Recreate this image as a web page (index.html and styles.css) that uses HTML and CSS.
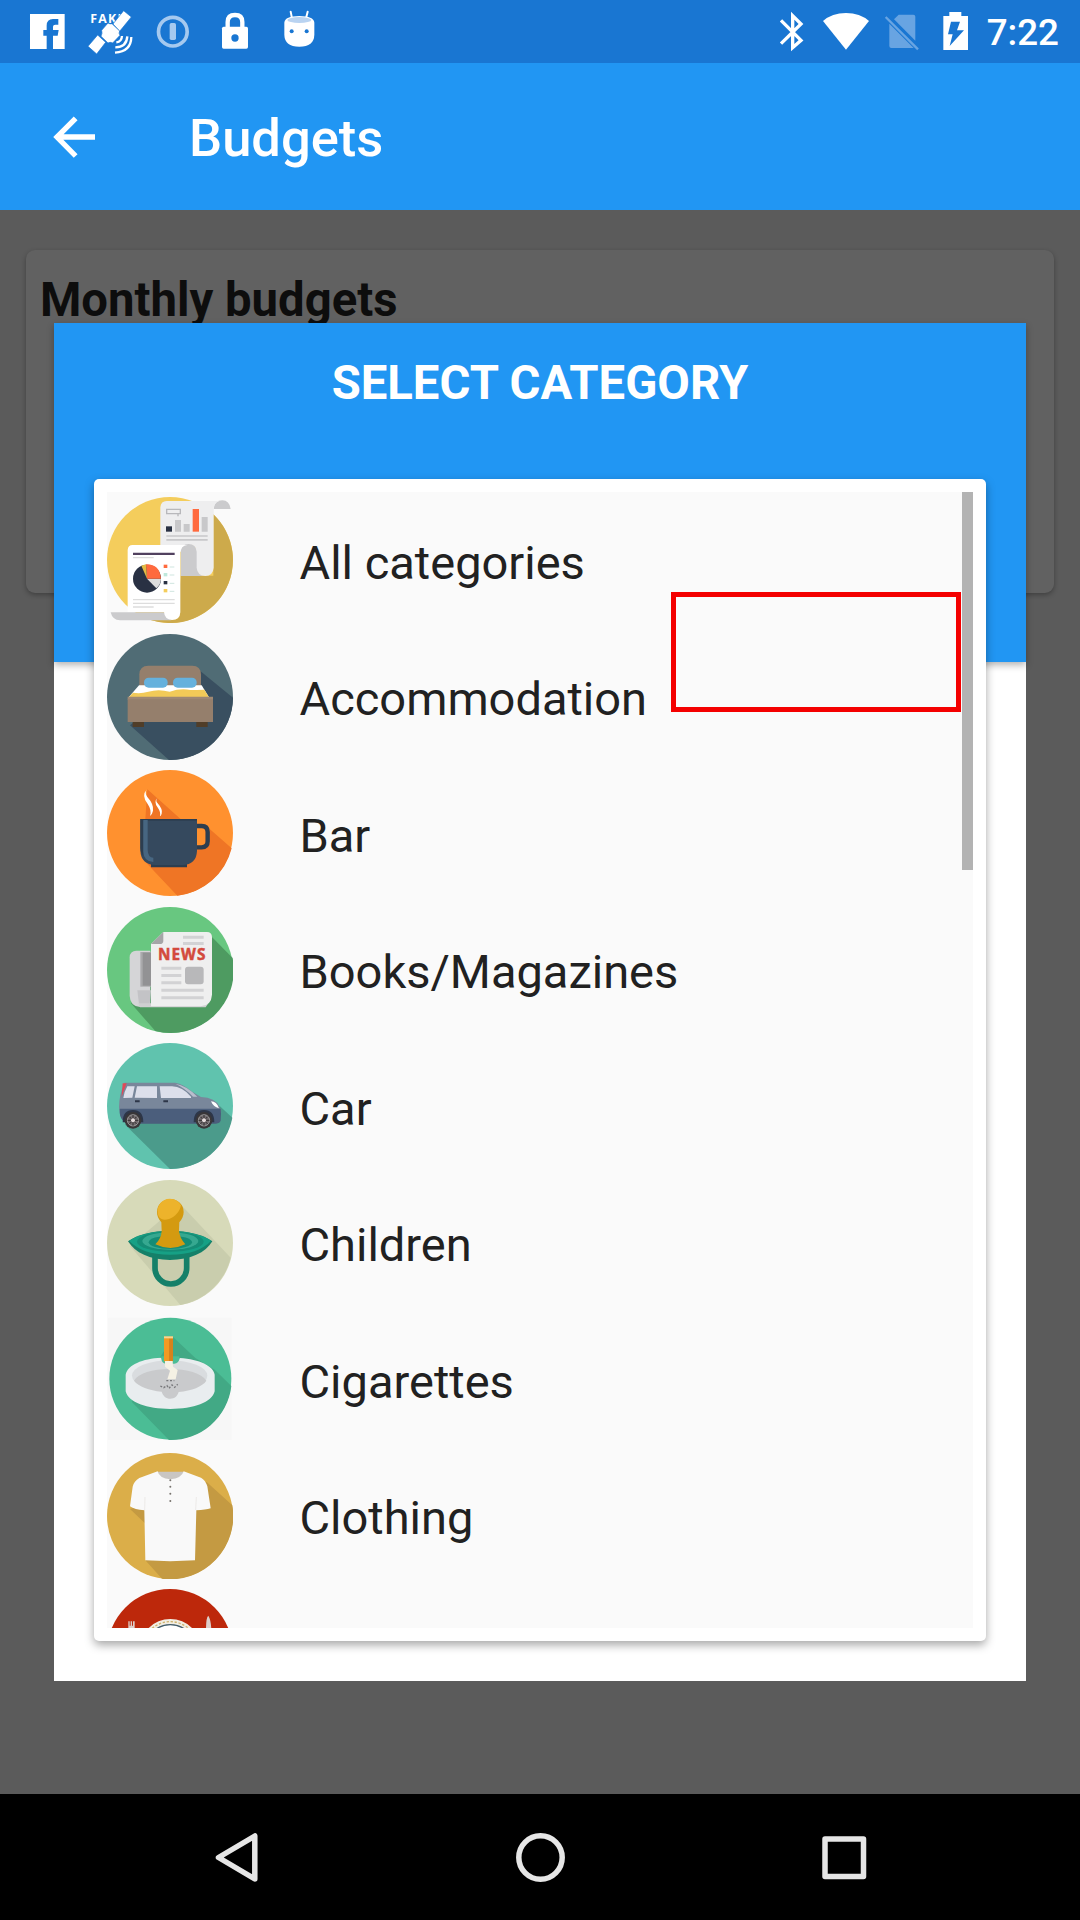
FILE: index.html
```html
<!DOCTYPE html>
<html lang="en">
<head>
<meta charset="utf-8">
<title>Budgets</title>
<link rel="stylesheet" href="styles.css">
</head>
<body>
<div class="screen">
  <header class="status">
    <div class="status-group">
      <svg width="76.67" height="63" viewBox="0 0 230 189"><path fill="#fff" d="M90 42h104v105h-35v-40h14l3-17h-17V80q0-6 7-6h9V57h-16q-19 0-19 20v13h-10v17h10v40H90z"/></svg>
      <svg width="66.67" height="63" viewBox="230 0 200 189"><text class="fake" x="270" y="69" textLength="102">FAKE</text><g stroke="#1976d2" stroke-width="2" fill="#fff"><path d="M263 139L292 105l24 22-27 35zM338 72l32-40 23 19-35 43z"/><path d="M304 91l19-22q6 4 12 2l23 22q-4 7 1 13l-22 23q-8-4-14 0l-21-20q5-9 2-18z"/></g><path fill="none" stroke="#fff" stroke-width="7" d="M348 127q16-2 17-19M345 142q34-1 36-33M344 158q48-3 49-47"/></svg>
      <svg width="60" height="63" viewBox="430 0 180 189"><circle cx="519.500" cy="95" r="43" fill="none" stroke="#a5c9ef" stroke-width="11"/><rect x="510" y="69" width="19" height="51" rx="5" fill="#a5c9ef"/></svg>
      <svg width="66.67" height="63" viewBox="610 0 200 189"><path fill="none" stroke="#fff" stroke-width="13" d="M684 84V66q0-21 22-21t22 21v18"/><rect x="667" y="80" width="78" height="66" rx="5" fill="#fff"/><circle cx="706" cy="114" r="11" fill="#1976d2"/></svg>
      <svg width="60" height="63" viewBox="810 0 180 189"><path stroke="#fff" stroke-width="6" stroke-linecap="round" d="M872 35l4 20M923 35l-5 20"/><path fill="#fff" d="M853 68q2-20 45-20t45 20v36q-1 36-45 36t-45-36z"/><ellipse cx="898" cy="60" rx="36" ry="9" fill="#b9d3f1"/><circle cx="875" cy="94" r="6" fill="#1976d2"/><circle cx="920" cy="94" r="6" fill="#1976d2"/></svg>
    </div>
    <div class="status-group">
      <svg width="40" height="63" viewBox="100 0 120 189"><path fill="none" stroke="#fff" stroke-width="10" d="M121 61l60 60-25 22V47l25 25-60 59"/></svg>
      <svg width="63.33" height="63" viewBox="220 0 190 189"><path fill="#fff" d="M247 63Q274 39 316 39t69 24l-69 86z"/></svg>
      <svg width="50" height="63" viewBox="410 0 150 189"><g fill="#68a4e2"><path d="M461 58l14-14h44q6 0 6 6v72z"/><path d="M447 71l73 73h-67q-6 0-6-6z"/></g><path stroke="#68a4e2" stroke-width="7" d="M436 51l97 97"/></svg>
      <svg width="56.67" height="63" viewBox="560 0 170 189"><path fill="#fff" d="M609 48h18V36h36v12h20v102h-74z"/><path fill="#1976d2" d="M632 65h27l-9 26h21l-43 47 9-35h-14z"/></svg>
      <span class="clock">7:22</span>
    </div>
  </header>

  <div class="toolbar">
    <svg class="back" width="43" height="43" viewBox="158 346 129 129"><path fill="none" stroke="#fff" stroke-width="16" d="M284 409H168M226 353l-56 56 56 57"/></svg>
    <h1 class="title">Budgets</h1>
  </div>

  <main class="page">
    <section class="budget-card"><h2 class="budget-title">Monthly budgets</h2></section>
    <div class="overlay">
      <section class="dialog">
        <div class="dialog-head">SELECT CATEGORY</div>
        <div class="panel">
          <ul class="list">
            <li class="row">
              <svg class="icon" viewBox="51 81 378 378"><circle cx="240" cy="270" r="189" fill="#f4cd5c"/><path fill="#cdaa4b" d="M370 133A189 189 0 0 1 182 450l80-3 10-130h98z"/><path fill="#cbcbcd" d="M371 117q2-26 26-26 21 0 25 26zM62 427h160l22 24H90q-23-1-28-24zM272 240q2-20 25-20t27 35v40q0 23 21 23h-73z"/><path fill="#eeeeef" d="M211 112q2-19 19-19h158q-17 6-17 24v176q-2 24-25 25-24-1-26-25v-48q-2-23-24-23-22 1-24 23h-61z"/><path fill="#fff" d="M113 240q1-15 15-15h164q-20 3-21 22v180q-1 23-25 23-22-1-24-24H113z"/><path fill="none" stroke="#b8b8bb" stroke-width="4" d="M230 118h41v13h-41zM264 132v7"/><path fill="#c8c8ca" d="M255 150h18v35h-18zM281 162h18v23h-18zM335 141h18v44h-18zM229 196h124v4H229zM229 207h124v5H229z"/><path fill="#293143" d="M228 169h18v16h-18z"/><path fill="#ff6a3e" d="M308 117h19v68h-19z"/><path fill="#51415f" d="M129 248h125v7H129z"/><path fill="#ddd" d="M129 261h62v4h-62zM129 387h125v4H129zM129 398h125v4H129zM129 409h62v4h-62z"/><circle cx="171" cy="326" r="42" fill="#293143"/><path fill="#ddd" d="M171 326h42q-1 18-14 29z"/><path fill="#ff6a3e" d="M171 326l-3-43q41-1 45 43z"/><path fill="#e3bb43" d="M171 326l-17-39 14-4z"/><path fill="#ff6a3e" d="M221 284h11v10h-11z"/><path fill="#bfe8dc" d="M221 309h11v10h-11z"/><path fill="#293143" d="M221 333h11v10h-11z"/><path fill="#f4cd5c" d="M221 357h11v10h-11z"/><path stroke="#cfe5df" stroke-width="3" d="M239 291h14M239 315h14M239 340h14M239 364h14"/></svg>
              <span class="label">All categories</span></li>
            <li class="row">
              <svg class="icon" viewBox="51 491 378 378"><circle cx="240" cy="680" r="189" fill="#506c75"/><path fill="#394f60" d="M328 600l101 82a189 189 0 0 1-192 187L120 765z"/><path fill="#957f6c" d="M148 652v-40q1-26 27-26h132q25 0 26 26v40z"/><path fill="#fff" d="M147 645h188l22 36H116z"/><path fill="#f2ca58" d="M129 667q23 4 46-3 30-9 64 0 33-11 62-5 18 0 42-1l15 24H115z"/><rect x="162" y="622" width="71" height="30" rx="14" fill="#65b1dd"/><rect x="249" y="622" width="71" height="30" rx="14" fill="#65b1dd"/><path fill="#9f8873" d="M113 679h256v10H113z"/><path fill="#957f6c" d="M113 687h256v68H113z"/><path fill="#503d28" d="M128 755h34v15h-34zM319 755h34v15h-34z"/></svg>
              <span class="label">Accommodation</span></li>
            <li class="row">
              <svg class="icon" viewBox="51 30 378 378"><circle cx="240" cy="219" r="189" fill="#ff912f"/><path fill="#ef7525" d="M172 88l103 92 78 22 72 63A189 189 0 0 1 262 407L158 297z"/><path fill="#ff912f" d="M320 203h26v54h-26z"/><path fill="#fff" d="M171 88q-8 11 1 23 20 22 17 41-2 11-9 16 6-17-7-36-20-25-2-44zM203 113q-8 9 0 17 16 18 12 31-2 6-5 8 3-12-6-25-15-19-1-31z"/><path fill="none" stroke="#2c3e50" stroke-width="13" d="M318 198h17q18 0 18 18v28q0 18-18 18h-22"/><path fill="#2c3e50" d="M183 308h108v14H183z"/><path fill="#35495e" d="M151 177h170v96q-2 41-43 42h-82q-43-2-45-43z"/><path fill="#2c3e50" d="M151 177h170v5H159v105q-8-10-8-23z"/><path fill="#476681" d="M160 180h13v90q1 23 17 23v13q-29-2-30-31z"/></svg>
              <span class="label">Bar</span></li>
            <li class="row">
              <svg class="icon" viewBox="51 440 378 378"><circle cx="240" cy="629" r="189" fill="#68c780"/><path fill="#4e9b61" d="M362 526l66 67A189 189 0 0 1 196 812l-73-83z"/><path fill="#d5d5d7" d="M119 591q1-20 20-20h42v169h-31q-30-3-31-34z"/><path fill="#aaaaac" d="M151 575h33v104h-33z"/><path fill="#929294" d="M158 577h25v99h-25z"/><path fill="#c3c3c6" d="M142 690h41l-5 50h-30z"/><path fill="#cfcfd1" d="M145 729h210l-8 12H150z"/><path fill="#efefef" d="M183 551l37-36h131q14 0 15 15v173q-2 33-34 35H183z"/><path fill="#a5a5a7" d="M183 551l37-36v26q0 10-11 10z"/><text class="news" x="204" y="600" textLength="142">NEWS</text><path fill="#d2d2d4" d="M279 526h62v9h-62zM279 545h62v9h-62zM214 619h60v9h-60zM214 641h60v9h-60zM214 663h60v9h-60zM214 685h127v9H214zM214 708h127v9H214z"/><rect x="285" y="619" width="56" height="53" rx="9" fill="#b8b8ba"/></svg>
              <span class="label">Books/Magazines</span></li>
            <li class="row">
              <svg class="icon" viewBox="51 25 378 378"><circle cx="240" cy="214" r="189" fill="#60c3ae"/><path fill="#4b9b8b" d="M390 215l37 34A189 189 0 0 1 240 403L104 269z"/><path fill="#79879b" d="M104 144h152q23 3 48 26l29 17q43 2 56 29l5 18-304 2-3-18q0-38 17-74z"/><path fill="#4b5e7c" d="M89 222h303q2 13 0 35-2 10-14 10H112q-22-10-23-33z"/><path fill="#dcdfeb" d="M112 155h22l-7 34-27 1q2-18 12-35zM141 155h60v35l-67-1zM209 155h37q31 1 57 31v4h-90z"/><path fill="#b9becd" d="M256 147q33 5 66 39h-13q-23-25-53-39z"/><path fill="#e04958" d="M98 146h12l-9 23-6 18z"/><path fill="#fff" d="M363 200q17 0 24 21-17-4-24-21z"/><path fill="#2d3648" d="M135 197h14v6h-14zM220 197h14v6h-14zM98 263q0-37 31-37t31 37zM311 263q0-37 31-37t31 37z"/><g fill="#393638"><circle cx="129" cy="257" r="25"/><circle cx="342" cy="257" r="25"/></g><g fill="#716b6d" stroke="#bbb" stroke-width="2"><circle cx="129" cy="257" r="17"/><circle cx="342" cy="257" r="17"/></g><path stroke="#332e30" stroke-width="3" d="M113 257h32M129 241v32M118 246l22 22M140 246l-22 22M326 257h32M342 241v32M331 246l22 22M353 246l-22 22"/><g fill="#e4dada"><circle cx="129" cy="257" r="6"/><circle cx="342" cy="257" r="6"/></g></svg>
              <span class="label">Car</span></li>
            <li class="row">
              <svg class="icon" viewBox="51 435 378 378"><circle cx="240" cy="624" r="189" fill="#d7dab9"/><path fill="#c9cdad" d="M270 506l152 162a189 189 0 0 1-151 142L120 633z"/><path fill="none" stroke="#158069" stroke-width="17" d="M195 660v39a47.500 48 0 0 0 95 0v-39"/><path fill="#158069" d="M114 619C140 600 185 587 240 587s102 13 127 32c-20 34-66 56-127 56s-105-22-126-56z"/><path fill="#16a085" d="M117 617c30-18 70-28 123-28s95 10 124 28c-27 27-66 42-124 42s-96-15-123-42z"/><ellipse cx="241" cy="620" rx="100" ry="30" fill="#158c75"/><ellipse cx="241" cy="618" rx="84" ry="26" fill="#36a890"/><ellipse cx="241" cy="622" rx="65" ry="20" fill="#158c75"/><path fill="#d49a10" d="M214 562c-9-10-13-20-13-31a40 39 0 0 1 80 0c0 11-5 22-13 31l-1 26q2 21 19 40-45 22-90 0 18-18 19-40z"/><path fill="#edb32b" d="M207 546a36 36 0 0 1 66-35c-4 19-16 34-36 41-13 4-22 3-30-6z"/></svg>
              <span class="label">Children</span></li>
            <li class="row">
              <svg class="icon" viewBox="51 19 378 378"><path fill="#f7f7f7" d="M55 24h369v367H55z"/><circle cx="241" cy="207" r="183" fill="#4bbd95"/><path fill="#42a985" d="M249 82l67 63 58 35 50 49A183 183 0 0 1 237 391L125 276z"/><path fill="#e9edef" d="M107 195c6-30 50-48 107-51q4 13 14 15h26q13-2 15-14c60 4 101 24 105 50v50c-8 33-63 53-133 53s-126-20-134-53z"/><ellipse cx="239" cy="198" rx="113" ry="46" fill="#d9dcdf"/><path fill="#4bbd95" d="M214 140h54v7q-2 13-15 15h-25q-13-2-14-15z"/><path fill="#c9cacc" d="M132 213c13-22 55-35 107-35s96 13 110 35c-12 18-43 30-83 34-4 13-12 20-25 20s-22-8-26-21c-38-4-69-15-83-33z"/><path fill="#f29a23" d="M222 81h27v74h-27z"/><path fill="#d8821c" d="M237 86h12v69h-12z"/><path fill="#f7d490" d="M222 80h27v6h-27z"/><path fill="#f5f1e4" d="M225 154h23l1 17 14 10-6 28h-25l8-26-15-12z"/><path stroke="#77777a" stroke-width="4" fill="none" stroke-dasharray="6 5" d="M229 213h24M211 229l10 5 10-6 6 8 9-10 8 7 9-9"/></svg>
              <span class="label">Cigarettes</span></li>
            <li class="row">
              <svg class="icon" viewBox="51 428 378 378"><circle cx="240" cy="617" r="189" fill="#dbae49"/><path fill="#c49a42" d="M350 515l77 70A189 189 0 0 1 216 805L168 752V642l-48-46 200-60z"/><path fill="#c9c6c3" d="M203 484h78l-8 25h-60z"/><path fill="#f9f9f9" d="M203 483q5 22 38 24 34-3 40-24l52 19q13 7 19 26l10 66q-15 5-43 6l-4 150q-74 5-149 0l-3-150q-29-2-43-12l8-59q4-17 20-26z"/><path fill="none" stroke="#e5e2df" stroke-width="2" d="M165 560l-1 39M319 560l-2 39"/><g fill="#77736e"><circle cx="241" cy="510" r="3"/><circle cx="241" cy="529" r="3"/><circle cx="241" cy="550" r="3"/><circle cx="241" cy="572" r="3"/></g></svg>
              <span class="label">Clothing</span></li>
            <li class="row">
              <svg class="icon" viewBox="51 838 378 378"><circle cx="240" cy="1027" r="189" fill="#bd280b"/><circle cx="241" cy="1020" r="92" fill="#f2eee3"/><circle cx="241" cy="1020" r="84" fill="none" stroke="#cfb36e" stroke-width="4" stroke-dasharray="7 5"/><circle cx="241" cy="1020" r="75" fill="#fff" stroke="#435d6b" stroke-width="4"/><path fill="#ddcfca" d="M115 935h4v13h3v-13h4v13h3v-13h5v30h-19zM348 960q0-37 7-42 8 13 9 42z"/></svg>
            </li>
          </ul>
        </div>
      </section>
    </div>
  </main>

  <nav class="nav">
    <svg width="1080" height="126" viewBox="0 1794 1080 126" fill="none" stroke="#e6e6e6" stroke-width="5.500" stroke-linejoin="round"><path d="M218.500 1857.500L254.800 1836v43z"/><circle cx="540.500" cy="1857.500" r="21.700"/><rect x="825" y="1839" width="38.500" height="37.500"/></svg>
  </nav>
  <div class="scrollbar"></div>
  <div class="highlight"></div>
</div>
</body>
</html>
```
FILE: styles.css
```css
* { box-sizing: border-box; }
body { margin: 0; font-family: Roboto, "Noto Sans", sans-serif; }
svg { display: block; flex: none; }
.screen {
  position: relative;
  display: flex;
  flex-direction: column;
  width: 1080px;
  height: 1920px;
  overflow: hidden;
}
.status {
  display: flex;
  justify-content: space-between;
  height: 63px;
  padding-right: 21px;
  background: #1976d2;
}
.status-group { display: flex; }
.fake { font: bold 37px "Open Sans", sans-serif; fill: #fff; }
.news { font: bold 46px "Open Sans", sans-serif; fill: #d34a3d; stroke: #d34a3d; stroke-width: 1.5px; }
.clock {
  padding-left: 3px;
  color: #fff;
  font-size: 36.75px;
  font-weight: 500;
  line-height: 65px;
}
.toolbar {
  display: flex;
  align-items: center;
  height: 147px;
  padding-left: 52.500px;
  background: #2196f3;
}
.back { margin-top: 1px; }
.title {
  margin: 3px 0 0 93.500px;
  color: #fff;
  font-size: 52.5px;
  font-weight: 500;
}
.page {
  position: relative;
  flex: 1;
  padding: 40px 26px;
  background: #5b5b5b;
}
.budget-card {
  height: 343px;
  padding: 22px 14px;
  border-radius: 9px;
  background: #616161;
  box-shadow: 0 2px 5px rgba(0, 0, 0, .3);
}
.budget-title {
  margin: 0;
  color: #0d0d0d;
  font-size: 47.25px;
  font-weight: 700;
  line-height: 56px;
}
.overlay {
  position: absolute;
  inset: 0;
  padding: 112.500px 54px;
}
.dialog { height: 1358px; background: #fff; }
.dialog-head {
  height: 339px;
  padding-top: 32px;
  background: #2196f3;
  box-shadow: 0 3px 7px rgba(0, 0, 0, .3);
  color: #fff;
  font-size: 47.25px;
  font-weight: 700;
  line-height: 56px;
  text-align: center;
}
.panel {
  position: relative;
  height: 1162.500px;
  margin: -183px 40px 0;
  padding: 13.500px 13px;
  border-radius: 5px;
  background: #fff;
  box-shadow: 0 4px 10px rgba(0, 0, 0, .35);
}
.list {
  height: 1136px;
  margin: 0;
  padding: 0;
  overflow: hidden;
  list-style: none;
  background: #fafafa;
}
.row {
  display: flex;
  align-items: center;
  gap: 66.500px;
  height: 136.500px;
  color: #212121;
  font-size: 47px;
}
.label { padding-top: 4px; }
.icon { width: 126px; height: 126px; }
.scrollbar {
  position: absolute;
  left: 962px;
  top: 492px;
  width: 11px;
  height: 378px;
  background: #b3b3b3;
}
.highlight {
  position: absolute;
  left: 671px;
  top: 592px;
  width: 290px;
  height: 120px;
  border: 5px solid #f40000;
}
.nav { height: 126px; background: #000; }
```
